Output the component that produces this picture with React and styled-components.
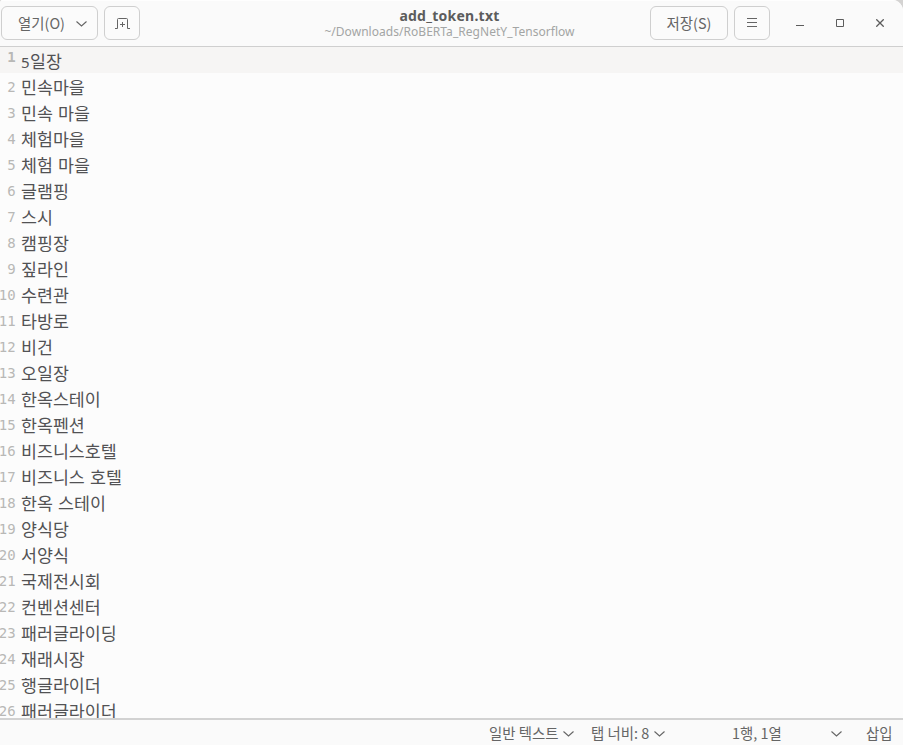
import React from "react";
import styled, { createGlobalStyle } from "styled-components";

const Global = createGlobalStyle`
  * { box-sizing: border-box; }
  html, body { margin: 0; padding: 0; background: #d4d3d2; overflow: hidden; }
`;

const sans = `"Noto Sans", "Noto Sans CJK KR", sans-serif`;

const Window = styled.main`
  width: 903px;
  height: 745px;
  display: flex;
  flex-direction: column;
  background: #fcfcfc;
  border-radius: 3px 11px 0 0;
  overflow: hidden;
  font-family: ${sans};
  color: #656565;
`;

const HeaderBar = styled.header`
  flex: none;
  height: 47px;
  display: grid;
  grid-template-columns: 1fr 300px 1fr;
  background: #fafafa;
  border-top: 1px solid #fefefe;
  border-bottom: 1px solid #cfcfcf;
`;

const HeaderGroup = styled.div`
  display: flex;
  align-items: flex-start;
  justify-content: ${(p) => (p.$end ? "flex-end" : "flex-start")};
  gap: 6px;
  padding: 5px ${(p) => (p.$end ? "3px" : "0")} 0 1px;
`;

const Button = styled.button`
  flex: none;
  width: ${(p) => p.$width}px;
  height: 34px;
  padding: 0 0 0 ${(p) => p.$inset || 0}px;
  display: flex;
  align-items: center;
  justify-content: center;
  gap: 11px;
  border: 1px solid #cfcfcf;
  border-radius: 6px;
  background: #fbfbfb;
  color: #656565;
  font: 14.4px/20px "Noto Sans CJK KR", ${sans};
  white-space: nowrap;
`;

const Titles = styled.div`
  display: flex;
  flex-direction: column;
  align-items: center;
  padding-top: 5px;
  margin-left: -4px;
`;

const Title = styled.h1`
  margin: 0;
  font: 700 14px/19px "Noto Sans", sans-serif;
  letter-spacing: 0.25px;
  color: #5c5c5c;
`;

const Subtitle = styled.div`
  font: 12px/16px "Noto Sans", sans-serif;
  margin-top: -1px;
  letter-spacing: 0.04px;
  color: #a3a5a4;
  white-space: nowrap;
`;

const WindowControls = styled.div`
  display: flex;
  height: 34px;
  margin-left: 4px;
`;

const Control = styled.button`
  width: 40px;
  padding: 0;
  border: 0;
  background: none;
  color: #5c5c5c;
  display: flex;
  align-items: center;
  justify-content: center;
`;

const Editor = styled.section`
  flex: 1;
  min-height: 0;
  overflow: hidden;
`;

const Line = styled.div`
  height: 26px;
  display: flex;
  background: ${(p) => (p.$current ? "#f6f5f4" : "transparent")};
`;

const Gutter = styled.span`
  flex: none;
  width: 16px;
  display: flex;
  justify-content: flex-end;
  font-family: "DejaVu Sans Mono", monospace;
  font-size: 14px;
  letter-spacing: 0.2px;
  font-weight: ${(p) => (p.$current ? 700 : 400)};
  line-height: ${(p) => (p.$current ? 20 : 28)}px;
  color: #b8b8b6;
`;

const LineText = styled.span`
  padding-left: 5px;
  font: 17.33px/27px "Noto Sans CJK KR", sans-serif;
  word-spacing: 1.3px;
  color: #525254;
  white-space: pre;
`;

const Digit = styled.span`
  display: inline-block;
  width: 9px;
  font: 15px/20px "Noto Sans", sans-serif;
`;

const StatusBar = styled.footer`
  flex: none;
  height: 27px;
  display: flex;
  align-items: center;
  padding: 1px 10px 0 489px;
  border-top: 2px solid #d2d2d2;
  background: #fafafa;
  font: 14.4px/24px "Noto Sans CJK KR", ${sans};
`;

const StatusItem = styled.div`
  flex: none;
  width: ${(p) => p.$width}px;
  display: flex;
  align-items: center;
  justify-content: space-between;
  margin-right: ${(p) => p.$after}px;
  white-space: nowrap;
`;

const Icon = styled.svg`
  display: block;
  flex: none;
  fill: none;
  stroke: currentColor;
  stroke-width: 1;
`;

const Chevron = () => (
  <Icon width="12" height="8" viewBox="0 0 12 8">
    <path strokeWidth="1.1" d="M.5 2.5 5.5 7 10.5 2.5" />
  </Icon>
);

const lines = [
  "5일장", "민속마을", "민속 마을", "체험마을", "체험 마을", "글램핑", "스시",
  "캠핑장", "짚라인", "수련관", "타방로", "비건", "오일장", "한옥스테이",
  "한옥펜션", "비즈니스호텔", "비즈니스 호텔", "한옥 스테이", "양식당", "서양식",
  "국제전시회", "컨벤션센터", "패러글라이딩", "재래시장", "행글라이더", "패러글라이더",
];

export default function App() {
  return (
    <>
      <Global />
      <Window>
        <HeaderBar>
          <HeaderGroup>
            <Button $width={97} $inset={7}>열기(O)<Chevron /></Button>
            <Button $width={36}>
              <Icon width="16" height="14" viewBox="0 0 16 14">
                <path d="M1 12.5h2.5v-9q0-1 1-1h8q1 0 1 1v9H16M6 8.5h5M8.5 6v5" />
              </Icon>
            </Button>
          </HeaderGroup>
          <Titles>
            <Title>add_token.txt</Title>
            <Subtitle>~/Downloads/RoBERTa_RegNetY_Tensorflow</Subtitle>
          </Titles>
          <HeaderGroup $end>
            <Button $width={78}>저장(S)</Button>
            <Button $width={36}>
              <Icon width="10" height="10" viewBox="0 0 10 10">
                <path d="M0 .5h10M0 4.5h10M0 8.5h10" />
              </Icon>
            </Button>
            <WindowControls>
              <Control>
                <Icon width="8" height="8" viewBox="0 0 8 8"><path d="M0 6.5h8" /></Icon>
              </Control>
              <Control>
                <Icon width="8" height="8" viewBox="0 0 8 8"><path d="M.5.5h7v7h-7z" /></Icon>
              </Control>
              <Control>
                <Icon width="8" height="8" viewBox="0 0 8 8"><path strokeWidth="1.3" d="m.3.3 7.4 7.4m0-7.4L.3 7.7" /></Icon>
              </Control>
            </WindowControls>
          </HeaderGroup>
        </HeaderBar>
        <Editor>
          {lines.map((text, i) => (
            <Line key={i} $current={i === 0}>
              <Gutter $current={i === 0}>{i + 1}</Gutter>
              <LineText>{i === 0 ? <><Digit>5</Digit>일장</> : text}</LineText>
            </Line>
          ))}
        </Editor>
        <StatusBar>
          <StatusItem $width={86} $after={16}>일반 텍스트<Chevron /></StatusItem>
          <StatusItem $width={75} $after={66}>탭 너비: 8<Chevron /></StatusItem>
          <StatusItem $width={111} $after={23}>1행, 1열<Chevron /></StatusItem>
          <StatusItem $width={27} $after={0}>삽입</StatusItem>
        </StatusBar>
      </Window>
    </>
  );
}
